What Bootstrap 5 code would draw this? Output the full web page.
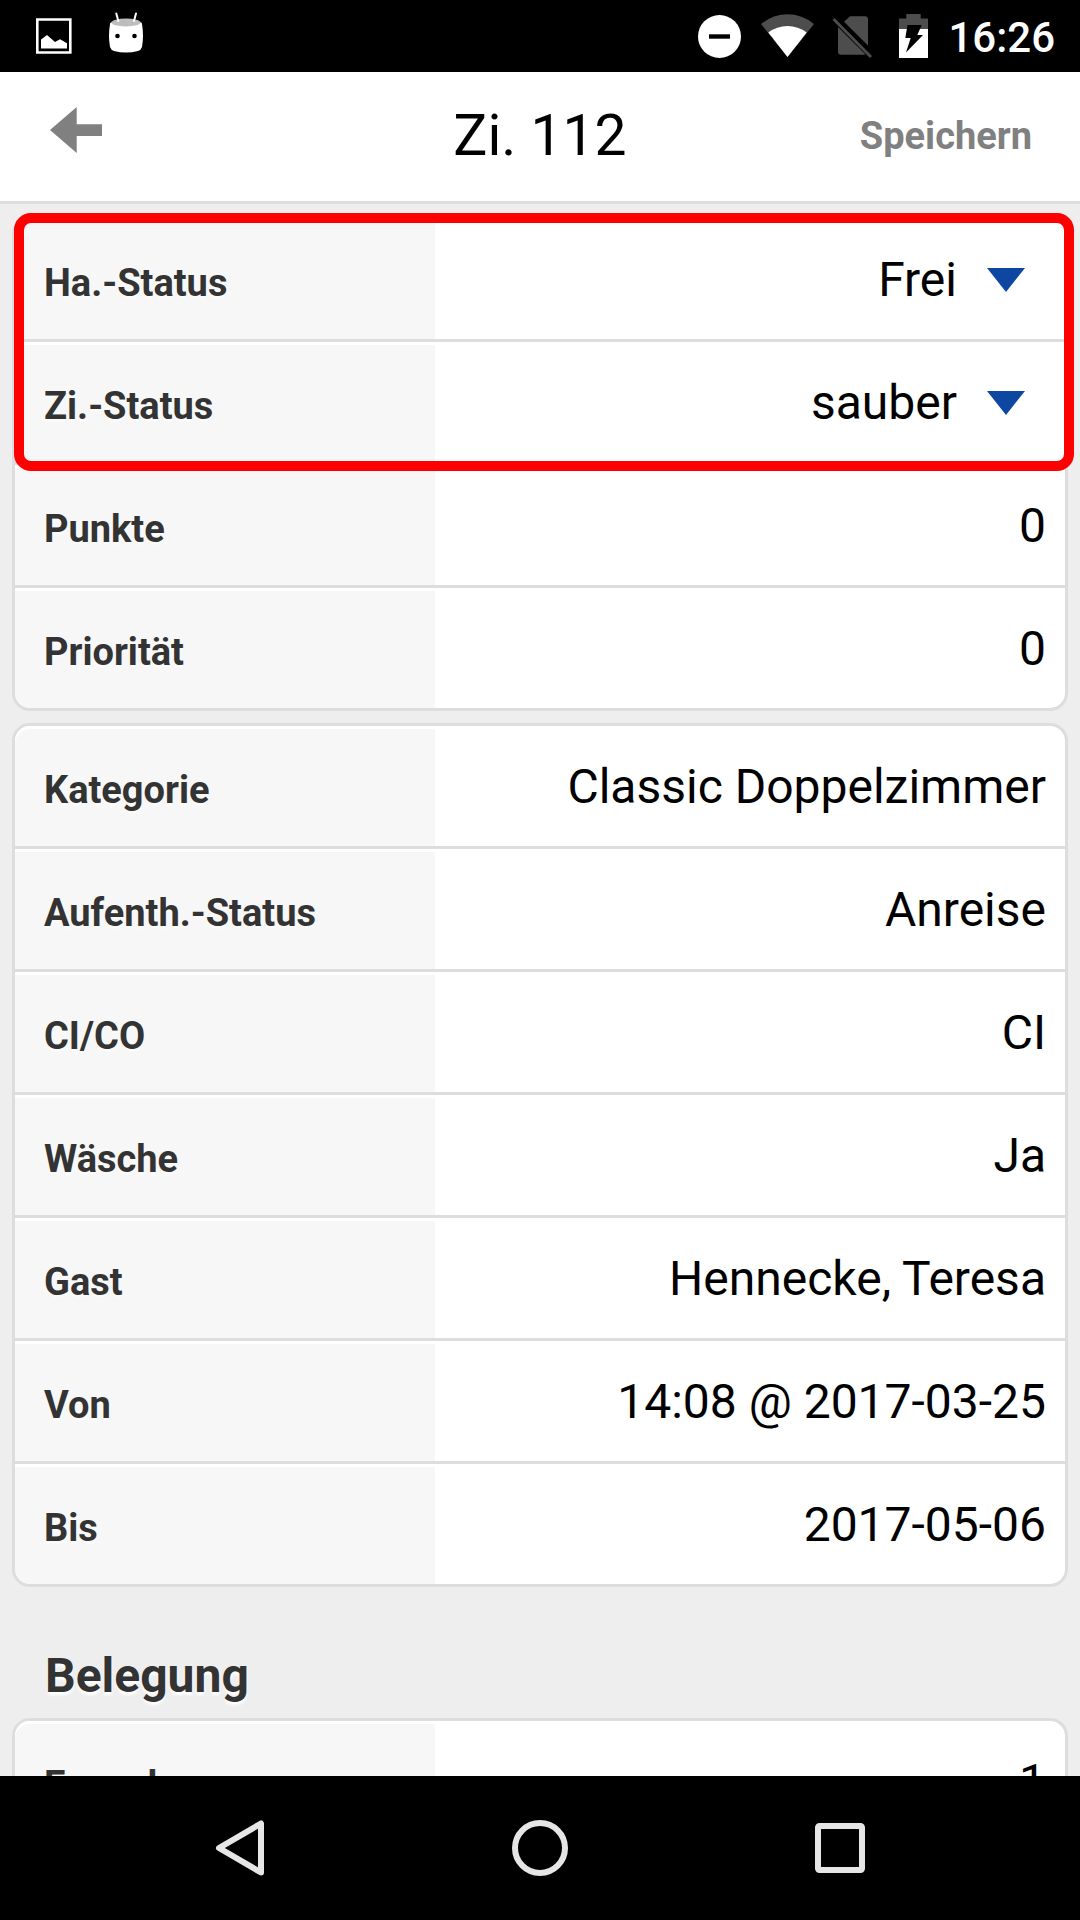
<!DOCTYPE html>
<html lang="de">
<head>
<meta charset="utf-8">
<meta name="viewport" content="width=device-width, initial-scale=1">
<title>Zi. 112</title>
<link rel="stylesheet" href="https://cdn.jsdelivr.net/npm/bootstrap@5.3.0/dist/css/bootstrap.min.css">
<style>
  body { font-family: Roboto, "Noto Sans", sans-serif; background: #eee; color: #000; }
  svg { display: block; flex: none; }
  .statusbar { height: 72px; padding: 0 25px 0 36px; }
  .icon-robot { margin-left: 36px; }
  .icon-wifi { margin-left: 19px; }
  .icon-sim { margin-left: 17px; }
  .icon-battery { margin-left: 27px; }
  .clock { font-size: 42px; line-height: 48px; font-weight: 500; margin-left: 19px; padding-top: 3px; }
  .topbar { display: grid; grid-template-columns: 1fr auto 1fr; height: 132px; border-bottom: 3px solid #ddd; padding: 0 48px; }
  .topbar h1 { font-size: 57px; line-height: 127px; font-weight: 400; }
  .back-link { padding-bottom: 14px; }
  .save-btn { font-size: 38px; line-height: 127px; font-weight: 700; color: #808080; }
  .screen { min-height: 0; padding: 12px 12px 0; overflow-y: auto; scrollbar-width: none; }
  .screen::-webkit-scrollbar { display: none; }
  .panel { border: 3px solid #ddd; border-radius: 18px; background: #fff; margin-bottom: 12px; }
  .entry { display: flex; height: 123px; border-bottom: 3px solid #ddd; margin: 0; }
  .panel > .entry:last-child { height: 120px; border-bottom: 0; }
  .entry dt { width: 40%; flex: none; padding: 8px 0 0 29px; font-size: 38px; line-height: 112px; font-weight: 700; color: #333;
    background: #f7f7f7; box-shadow: inset 0 3px #fff; text-shadow: 0 3px 0 #fafafa; }
  .entry:first-child dt { border-top-left-radius: 15px; }
  .panel > .entry:last-child dt { border-bottom-left-radius: 15px; }
  .entry dd { flex: 1; margin: 0; padding: 2px 19px 0 0; text-align: right; font-size: 48px; line-height: 118px; }
  .entry dd.pick { padding: 0; }
  .marked dt { border-radius: 0; }
  .marked::after { content: ""; position: absolute; inset: -6px -9px -6px -1px; border: 10px solid #f00; border-radius: 17px; pointer-events: none; }
  .pick .form-select { height: 120px; padding: 2px 108px 0 0; border: 0; border-radius: 0; color: #000; font-size: 48px; line-height: 118px;
    text-align: right; text-align-last: right; background-color: transparent; background-position: right 40px top 49px; background-size: 38px 24px;
    --bs-form-select-bg-img: url("data:image/svg+xml,%3csvg xmlns='http://www.w3.org/2000/svg' viewBox='0 0 38 24'%3e%3cpath fill='%230d47a1' d='M0 0h38L19 24z'/%3e%3c/svg%3e"); }
  .group-title { font-size: 48px; line-height: 58px; font-weight: 700; color: #333; margin: 60px 0 13px; padding-left: 33px; text-shadow: 0 3px 3px #fff; }
  .softkeys { height: 144px; padding: 0 90px; }
  .softkeys button { flex: 1; }
</style>
<script src="https://cdn.jsdelivr.net/npm/bootstrap@5.3.0/dist/js/bootstrap.bundle.min.js"></script>
</head>
<body class="d-flex flex-column vh-100 overflow-hidden">

<div class="statusbar bg-black text-white d-flex align-items-center flex-shrink-0">
  <svg width="36" height="72" viewBox="36 0 36 72" aria-hidden="true">
    <path fill="none" stroke="#fff" stroke-width="2.6" d="M37.300 19.500h33v33h-33z"/>
    <path fill="#fff" d="M41 48.500v-9l6-4.500 8 7 5-2.800 7 4v5.300z"/>
  </svg>
  <svg class="icon-robot me-auto" width="36" height="72" viewBox="108 0 36 72" aria-hidden="true">
    <path fill="#fff" d="M110 24q0-2 3-2h26q3 0 3 2 2 12 0 23-1 3-4 4-12 3-24 0-3-1-4-4-2-11 0-23z"/>
    <ellipse cx="126" cy="22.500" rx="14.500" ry="3.900" fill="#bdbdbd"/>
    <path stroke="#fff" stroke-width="2" stroke-linecap="round" d="M116.300 13.500l2 7.500M136 13.500l-2 7.500"/>
    <circle cx="117.500" cy="36" r="2.300"/><circle cx="134.500" cy="36" r="2.300"/>
  </svg>
  <svg width="44" height="72" viewBox="698 0 44 72" aria-hidden="true">
    <circle cx="719.500" cy="36.500" r="21.500" fill="#fff"/><path d="M709 34.300h21v4.400h-21z"/>
  </svg>
  <svg class="icon-wifi" width="54" height="72" viewBox="761 0 54 72" aria-hidden="true">
    <path fill="#4d4d4d" d="M761 24Q773 14.300 787.500 14.300T814 24L787.500 57z"/>
    <path fill="#fff" d="M768.300 32.500Q777 26 787.500 26t19.200 6.500L787.500 57z"/>
  </svg>
  <svg class="icon-sim" width="40" height="72" viewBox="832 0 40 72" aria-hidden="true">
    <path fill="#4d4d4d" d="M850 16.300h15q3 0 3 3v26.200L844 21.800zM838 27l27.300 27.300q-.6.400-1.300.4h-23q-3 0-3-3z"/>
    <path stroke="#4d4d4d" stroke-width="2.800" d="M833.500 19l37.500 38"/>
  </svg>
  <svg class="icon-battery" width="30" height="72" viewBox="899 0 30 72" aria-hidden="true">
    <path fill="#4d4d4d" d="M899 29V18.500h7.300V14h14.400v4.500h7.300V29z"/>
    <path fill="#fff" d="M899 29h29v29h-29z"/>
    <path d="M907.500 25h14.200l-4.400 10h5.700l-17 17.500 4.700-14.500h-5.400z"/>
  </svg>
  <span class="clock">16:26</span>
</div>

<header class="topbar bg-white flex-shrink-0">
  <a class="back-link d-flex align-items-center" href="#" aria-label="Zurück">
    <svg width="56" height="48" viewBox="48 106 56 48"><path fill="#808080" d="M50 130l26.700-23v17.300H102v11.700H76.700v17z"/></svg>
  </a>
  <h1 class="m-0">Zi. 112</h1>
  <button type="button" class="save-btn border-0 bg-transparent p-0 ms-auto">Speichern</button>
</header>

<main class="screen flex-grow-1">
  <dl class="panel">
    <div class="marked position-relative">
      <div class="entry"><dt><label for="ha">Ha.-Status</label></dt><dd class="pick"><select id="ha" class="form-select"><option>Frei</option></select></dd></div>
      <div class="entry"><dt><label for="zi">Zi.-Status</label></dt><dd class="pick"><select id="zi" class="form-select"><option>sauber</option></select></dd></div>
    </div>
    <div class="entry"><dt>Punkte</dt><dd>0</dd></div>
    <div class="entry"><dt>Priorität</dt><dd>0</dd></div>
  </dl>

  <dl class="panel">
    <div class="entry"><dt>Kategorie</dt><dd>Classic Doppelzimmer</dd></div>
    <div class="entry"><dt>Aufenth.-Status</dt><dd>Anreise</dd></div>
    <div class="entry"><dt>CI/CO</dt><dd>CI</dd></div>
    <div class="entry"><dt>Wäsche</dt><dd>Ja</dd></div>
    <div class="entry"><dt>Gast</dt><dd>Hennecke, Teresa</dd></div>
    <div class="entry"><dt>Von</dt><dd>14:08 @ 2017-03-25</dd></div>
    <div class="entry"><dt>Bis</dt><dd>2017-05-06</dd></div>
  </dl>

  <h2 class="group-title">Belegung</h2>
  <dl class="panel">
    <div class="entry"><dt>Erwachsene</dt><dd>1</dd></div>
  </dl>
</main>

<nav class="softkeys bg-black d-flex flex-shrink-0" aria-label="System">
  <button type="button" class="bg-transparent border-0 p-0 d-flex align-items-center justify-content-center" aria-label="Zurück">
    <svg width="56" height="56" viewBox="212 1820 56 56"><path fill="none" stroke="#e6e6e6" stroke-width="6" stroke-linejoin="round" d="M261 1823.500v49L219 1848z"/></svg>
  </button>
  <button type="button" class="bg-transparent border-0 p-0 d-flex align-items-center justify-content-center" aria-label="Startseite">
    <svg width="56" height="56" viewBox="0 0 56 56"><circle cx="28" cy="28" r="25" fill="none" stroke="#e6e6e6" stroke-width="6"/></svg>
  </button>
  <button type="button" class="bg-transparent border-0 p-0 d-flex align-items-center justify-content-center" aria-label="Übersicht">
    <svg width="56" height="56" viewBox="0 0 56 56"><rect x="6" y="6" width="44" height="44" rx="1.500" fill="none" stroke="#e6e6e6" stroke-width="6"/></svg>
  </button>
</nav>
</body>
</html>
